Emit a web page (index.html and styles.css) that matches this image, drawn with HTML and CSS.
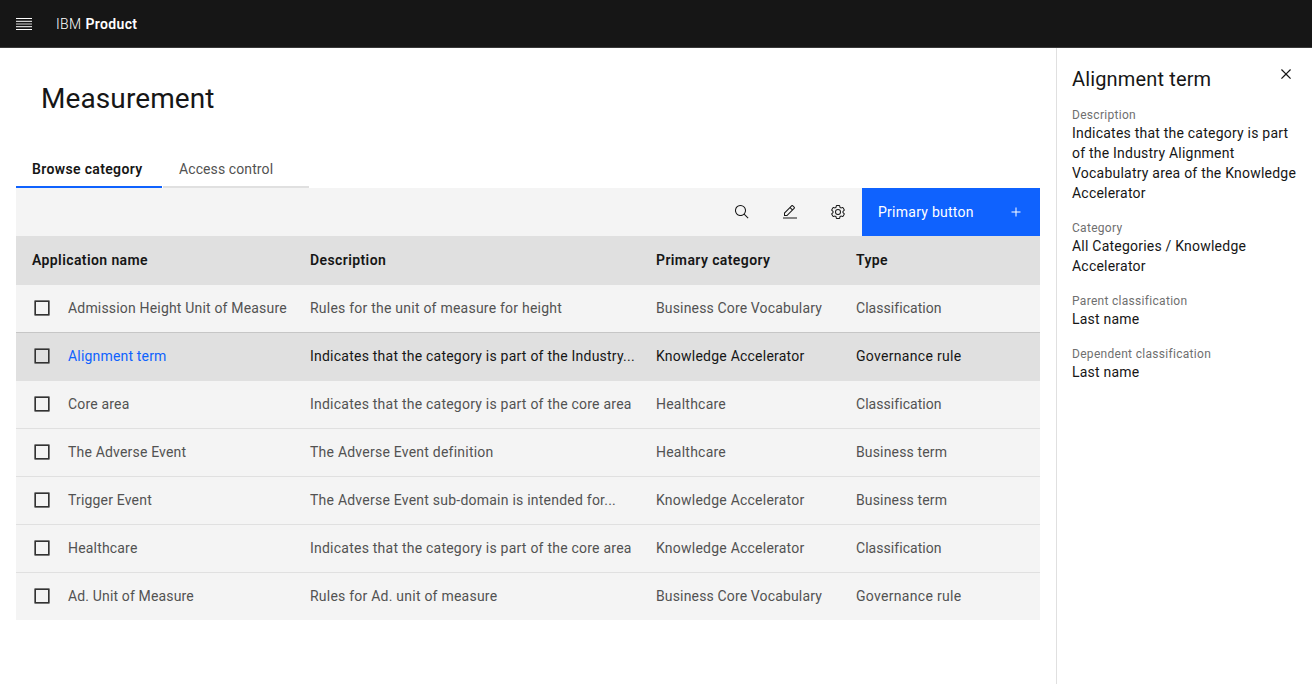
FILE: index.html
```html
<!DOCTYPE html>
<html lang="en">
<head>
<meta charset="utf-8">
<title>Measurement</title>
<link rel="stylesheet" href="styles.css">
</head>
<body>
<header class="header">
  <svg class="menu" width="16" height="12" viewBox="0 0 16 12"><path fill="#fff" d="M0 0h16v1H0zM0 11h16v1H0z"/><path fill="#fff" fill-opacity=".8" d="M0 2.700h16v1.200H0zM0 5.400h16v1.200H0zM0 8.100h16v1.200H0z"/></svg>
  <span class="brand">IBM</span><span class="product">Product</span>
</header>
<div class="shell">
  <main class="main">
    <h1 class="title">Measurement</h1>
    <nav class="tabs">
      <a class="tab tab-active">Browse category</a>
      <a class="tab">Access control</a>
    </nav>
    <div class="toolbar">
      <button class="tool"><svg width="16" height="16" viewBox="0 0 32 32"><path d="M29 27.586l-7.552-7.552a11.018 11.018 0 1 0-1.414 1.414L27.586 29ZM4 13a9 9 0 1 1 9 9 9.010 9.010 0 0 1-9-9Z"/></svg></button>
      <button class="tool"><svg width="16" height="16" viewBox="0 0 32 32"><path d="M2 27h28v2H2zM25.400 9c.8-.8.8-2 0-2.800l-3.600-3.600c-.8-.8-2-.8-2.800 0l-15 15V24h6.400L25.400 9zM20.400 4L24 7.600l-3 3L17.400 7l3-3zM6 22v-3.600l10-10 3.600 3.600-10 10H6z"/></svg></button>
      <button class="tool"><svg width="16" height="16" viewBox="0 0 32 32"><path d="M27 16.760c0-.25 0-.5 0-.76s0-.51 0-.77l1.920-1.680A2 2 0 0 0 29.300 11L26.940 7a2 2 0 0 0-1.730-1 2 2 0 0 0-.64.1l-2.430.82a11.350 11.350 0 0 0-1.310-.75l-.51-2.520a2 2 0 0 0-2-1.610H13.640a2 2 0 0 0-2 1.610l-.51 2.520a11.480 11.480 0 0 0-1.320.75L7.430 6.060A2 2 0 0 0 6.790 6 2 2 0 0 0 5.060 7L2.700 11a2 2 0 0 0 .41 2.510L5 15.240c0 .25 0 .5 0 .76s0 .51 0 .77l-1.890 1.680A2 2 0 0 0 2.700 21l2.360 4a2 2 0 0 0 1.730 1 2 2 0 0 0 .64-.1l2.430-.82a11.350 11.350 0 0 0 1.310.75l.51 2.520a2 2 0 0 0 2 1.610h4.720a2 2 0 0 0 2-1.610l.51-2.520a11.480 11.480 0 0 0 1.320-.75l2.420.82a2 2 0 0 0 .64.1 2 2 0 0 0 1.730-1l2.280-4a2 2 0 0 0-.41-2.510ZM25.210 24l-3.430-1.160a8.860 8.860 0 0 1-2.710 1.570L18.360 28H13.640l-.71-3.550a9.360 9.360 0 0 1-2.700-1.570L6.790 24 4.430 20l2.720-2.400a8.900 8.900 0 0 1 0-3.130L4.430 12l2.360-4 3.430 1.160a8.860 8.860 0 0 1 2.710-1.570L13.640 4h4.720l.71 3.550a9.360 9.360 0 0 1 2.700 1.570L25.210 8l2.360 4-2.720 2.400a8.900 8.900 0 0 1 0 3.130L27.570 20Z"/><path d="M16 22a6 6 0 1 1 6-6 5.940 5.940 0 0 1-6 6Zm0-10a3.910 3.910 0 0 0-4 4 3.910 3.910 0 0 0 4 4 3.910 3.910 0 0 0 4-4 3.910 3.910 0 0 0-4-4Z"/></svg></button>
      <button class="primary"><span>Primary button</span><svg width="16" height="16" viewBox="0 0 32 32"><path fill="#fff" d="M17 15V7h-2v8H7v2h8v8h2v-8h8v-2z"/></svg></button>
    </div>
    <div class="table">
      <div class="row head"><span>Application name</span><span>Description</span><span>Primary category</span><span>Type</span></div>
      <div class="row above-selected"><span class="name"><i class="box"></i>Admission Height Unit of Measure</span><span>Rules for the unit of measure for height</span><span class="compact">Business Core Vocabulary</span><span class="tight">Classification</span></div>
      <div class="row selected"><span class="name"><i class="box"></i><a class="link">Alignment term</a></span><span>Indicates that the category is part of the Industry...</span><span>Knowledge Accelerator</span><span class="wide">Governance rule</span></div>
      <div class="row"><span class="name"><i class="box"></i>Core area</span><span>Indicates that the category is part of the core area</span><span>Healthcare</span><span class="tight">Classification</span></div>
      <div class="row"><span class="name"><i class="box"></i>The Adverse Event</span><span>The Adverse Event definition</span><span>Healthcare</span><span class="compact">Business term</span></div>
      <div class="row"><span class="name"><i class="box"></i>Trigger Event</span><span>The Adverse Event sub-domain is intended for...</span><span>Knowledge Accelerator</span><span class="compact">Business term</span></div>
      <div class="row"><span class="name"><i class="box"></i>Healthcare</span><span>Indicates that the category is part of the core area</span><span>Knowledge Accelerator</span><span class="tight">Classification</span></div>
      <div class="row"><span class="name compact"><i class="box"></i>Ad. Unit of Measure</span><span>Rules for Ad. unit of measure</span><span class="compact">Business Core Vocabulary</span><span class="wide">Governance rule</span></div>
    </div>
  </main>
  <aside class="panel">
    <div class="panel-head">
      <h2 class="panel-title">Alignment term</h2>
      <svg class="close" width="20" height="20" viewBox="0 0 32 32"><path d="M24 9.400L22.600 8 16 14.600 9.400 8 8 9.400l6.600 6.600L8 22.600 9.400 24l6.600-6.600 6.600 6.600 1.400-1.400-6.600-6.600z"/></svg>
    </div>
    <dl class="details">
      <div><dt>Description</dt><dd>Indicates that the category is part<br>of the Industry Alignment<br>Vocabulatry area of the Knowledge<br>Accelerator</dd></div>
      <div><dt>Category</dt><dd>All Categories / Knowledge<br>Accelerator</dd></div>
      <div><dt>Parent classification</dt><dd>Last name</dd></div>
      <div><dt>Dependent classification</dt><dd>Last name</dd></div>
    </dl>
  </aside>
</div>
</body>
</html>
```
FILE: styles.css
```css
* { box-sizing: border-box; }
body {
  margin: 0;
  background: #fff;
  color: #161616;
  font: 14px/20px Roboto, "Liberation Sans", sans-serif;
  letter-spacing: 0.23px;
  overflow: hidden;
}
.header {
  height: 48px;
  display: flex;
  align-items: center;
  padding-left: 16px;
  background: #161616;
  border-bottom: 1px solid #393939;
  color: #fff;
  letter-spacing: 0.35px;
}
.menu { margin-right: 24px; }
.brand { margin-right: 4px; font-weight: 300; }
.product { font-weight: 600; }
.shell { display: flex; height: 636px; }
.main { flex: none; width: 1056px; padding: 0 16px; }
.title {
  margin: 33px 0 0 25px;
  font-size: 28px;
  line-height: 36px;
  font-weight: 400;
  letter-spacing: 0.1px;
}
.tabs {
  display: flex;
  gap: 1px;
  margin-top: 31px;
}
.tab {
  width: 146px;
  height: 40px;
  padding: 11px 16px 0;
  border-bottom: 2px solid #e0e0e0;
  color: #525252;
  letter-spacing: 0.1px;
  white-space: nowrap;
}
.tab-active {
  border-color: #0f62fe;
  color: #161616;
  font-weight: 600;
  letter-spacing: 0.35px;
}
.toolbar {
  display: flex;
  justify-content: flex-end;
  height: 48px;
  background: #f4f4f4;
}
.tool {
  width: 48px;
  padding: 0;
  border: 0;
  background: none;
  display: flex;
  align-items: center;
  justify-content: center;
}
.tool svg, .close { fill: #161616; }
.primary {
  width: 178px;
  padding: 0 16px;
  border: 0;
  display: flex;
  align-items: center;
  justify-content: space-between;
  background: #0f62fe;
  color: #fff;
  font: inherit;
  letter-spacing: 0.26px;
}
.row {
  display: grid;
  grid-template-columns: 278px 346px 200px 1fr;
  grid-template-rows: 46px;
  align-items: center;
  height: 48px;
  padding-left: 16px;
  background: #f4f4f4;
  border-bottom: 1px solid #e0e0e0;
  color: #525252;
  white-space: nowrap;
}
.head {
  height: 49px;
  grid-template-rows: 48px;
  background: #e0e0e0;
  color: #161616;
  font-weight: 600;
  letter-spacing: 0.4px;
}
.above-selected { border-color: #c6c6c6; }
.selected { background: #e0e0e0; color: #161616; }
.row:last-child { height: 47px; border: 0; }
.name { display: flex; align-items: center; letter-spacing: 0.18px; }
.compact { letter-spacing: 0.15px; }
.tight { letter-spacing: 0.05px; }
.wide { letter-spacing: 0.3px; }
.box {
  width: 16px;
  height: 16px;
  margin: 0 18px 0 2px;
  border: 1px solid #767676;
  border-radius: 1px;
  box-shadow: inset 0 0 0 1px #333;
}
.link { color: #0f62fe; }
.panel {
  flex: none;
  width: 256px;
  padding: 17px 16px 0 15px;
  border-left: 1px solid #e0e0e0;
}
.panel-head { display: flex; justify-content: space-between; }
.panel-title {
  margin: 0;
  font-size: 20px;
  line-height: 28px;
  font-weight: 400;
  letter-spacing: 0.15px;
}
.close { margin: -1px 0 0; }
.details { margin: 14px 0 0; white-space: nowrap; letter-spacing: 0.22px; }
.details div { margin-bottom: 17px; }
.details dt {
  font-size: 12px;
  line-height: 16px;
  letter-spacing: 0.3px;
  color: #6f6f6f;
}
.details dd { margin: 0; }
```
